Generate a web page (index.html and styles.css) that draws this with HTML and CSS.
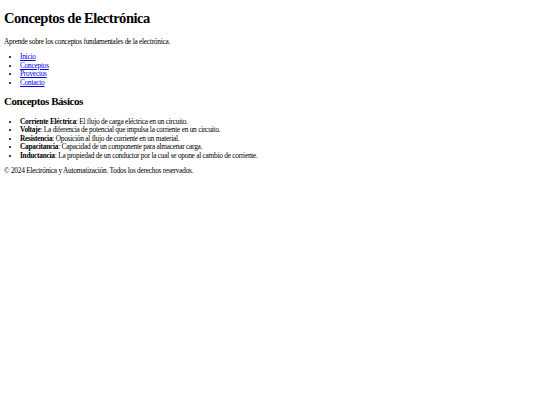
FILE: index.html
```html
<!DOCTYPE html>
<html lang="es">
<head>
<meta charset="utf-8">
<title>Conceptos de Electrónica</title>
<link rel="stylesheet" href="styles.css">
</head>
<body>
<header>
<h1 class="title">Conceptos de Electrónica</h1>
<p class="intro">Aprende sobre los conceptos fundamentales de la electrónica.</p>
</header>
<nav>
<ul class="nav-list">
<li><a href="#">Inicio</a></li>
<li><a href="#">Conceptos</a></li>
<li><a href="#">Proyectos</a></li>
<li><a href="#">Contacto</a></li>
</ul>
</nav>
<main>
<section>
<h2 class="section-title">Conceptos Básicos</h2>
<ul class="concept-list">
<li><strong>Corriente Eléctrica</strong>: El flujo de carga eléctrica en un circuito.</li>
<li><strong>Voltaje</strong>: La diferencia de potencial que impulsa la corriente en un circuito.</li>
<li><strong>Resistencia</strong>: Oposición al flujo de corriente en un material.</li>
<li><strong>Capacitancia</strong>: Capacidad de un componente para almacenar carga.</li>
<li><strong>Inductancia</strong>: La propiedad de un conductor por la cual se opone al cambio de corriente.</li>
</ul>
</section>
</main>
<footer>
<p class="copyright">&copy; 2024 Electrónica y Automatización. Todos los derechos reservados.</p>
</footer>
</body>
</html>
```
FILE: styles.css
```css
html {
  background: #fff;
}
body {
  margin: 0;
  padding: 0 4px;
  font-family: "Liberation Serif", "Times New Roman", serif;
  font-size: 7.35px;
  line-height: 8.5px;
  letter-spacing: -0.25px;
  color: #000;
}
.title {
  margin: 10px 0 0;
  font-size: 14.5px;
  line-height: 16px;
  letter-spacing: -0.47px;
  font-weight: bold;
}
.intro {
  margin: 11.75px 0 0;
}
.nav-list,
.concept-list {
  margin: 7px 0 0;
  padding-left: 16px;
}
.nav-list a {
  color: #0000ee;
}
.section-title {
  margin: 7.5px 0 0;
  font-size: 11px;
  line-height: 12px;
  letter-spacing: -0.45px;
  font-weight: bold;
}
.concept-list {
  margin-top: 11px;
}
.copyright {
  margin: 6.75px 0 0;
}
```
